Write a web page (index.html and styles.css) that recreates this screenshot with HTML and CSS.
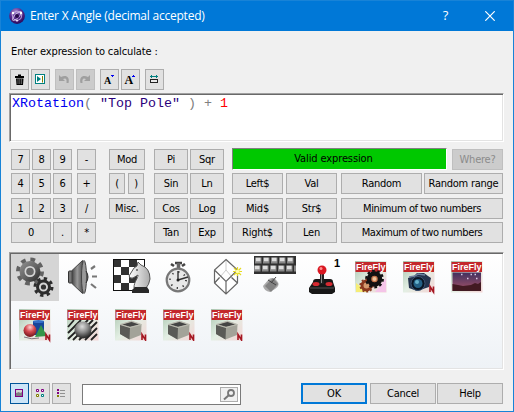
FILE: index.html
```html
<!DOCTYPE html>
<html lang="en">
<head>
<meta charset="utf-8">
<title>Enter X Angle (decimal accepted)</title>
<link rel="stylesheet" href="styles.css">
</head>
<body>
<svg width="0" height="0" class="defs">
  <defs>
    <linearGradient id="metal" x1="0" y1="0" x2="1" y2="1"><stop offset="0" stop-color="#888"/><stop offset=".5" stop-color="#666"/><stop offset="1" stop-color="#333"/></linearGradient>
    <linearGradient id="horn" x1="0" y1="0" x2="1" y2="0"><stop offset="0" stop-color="#444"/><stop offset=".5" stop-color="#999"/><stop offset="1" stop-color="#555"/></linearGradient>
    <linearGradient id="tile" x1="0" y1="0" x2="1" y2="1"><stop offset="0" stop-color="#a9c3ad"/><stop offset=".5" stop-color="#e3efe4"/><stop offset="1" stop-color="#f3d5d5"/></linearGradient>
    <linearGradient id="knight" x1="0" y1="0" x2="1" y2="0"><stop offset="0" stop-color="#fff"/><stop offset="1" stop-color="#aaa"/></linearGradient>
    <linearGradient id="dusk" x1="0" y1="0" x2="0" y2="1"><stop offset="0" stop-color="#41305f"/><stop offset="1" stop-color="#a65368"/></linearGradient>
    <radialGradient id="ball" cx=".45" cy=".3" r=".7"><stop offset="0" stop-color="#ddd"/><stop offset=".5" stop-color="#888"/><stop offset="1" stop-color="#222"/></radialGradient>
    <radialGradient id="redball" cx=".5" cy=".25" r=".7"><stop offset="0" stop-color="#ffd0d0"/><stop offset=".5" stop-color="#d54a50"/><stop offset="1" stop-color="#7c1a20"/></radialGradient>
    <radialGradient id="orb" cx=".4" cy=".25" r=".75"><stop offset="0" stop-color="#a58bd0"/><stop offset=".5" stop-color="#5a2d91"/><stop offset="1" stop-color="#2c0b5c"/></radialGradient>
    <symbol id="fly" viewBox="0 0 32 32">
      <rect width="31.5" height="31.5" fill="url(#tile)"/>
      <rect x=".5" y="1" width="30.500" height="10" fill="#c3272b"/>
      <text x="1" y="9" class="fly-name" textLength="29.5" lengthAdjust="spacingAndGlyphs">FireFly</text>
    </symbol>
    <symbol id="fly-box" viewBox="0 0 32 32">
      <use href="#fly" width="32" height="32"/>
      <path d="M5 15.500 16.500 12 26.500 15.500 26 26 14.500 30.500 5 25Z" fill="#a3a399"/>
      <path d="M5 15.500 15 18.500 14.500 30.500 5 25Z" fill="#5a5a56"/>
      <path d="M7.500 15.500 16.500 13 24 15.500 15 17.800Z" fill="#444"/>
      <path d="M5 15.500 16.500 12 26.500 15.500 15 18.500Z" fill="none" stroke="#bdbdb2"/>
      <path d="M27 31V25.500l3.500 5.500v-5.500" class="mark"/>
    </symbol>
  </defs>
</svg>
<main class="dialog">
  <header class="titlebar">
    <svg class="app-icon" viewBox="0 0 16 16"><circle cx="8" cy="8" r="7.900" fill="url(#orb)"/><path d="M3 5.500 8 3l5 2.500-1 5L8 13 4 10.500Z" fill="none" stroke="#c5afdf" stroke-width=".9"/><ellipse cx="8" cy="8" rx="2" ry="6" transform="rotate(45 8 8)" fill="none" stroke="#e4d6f2" stroke-width=".8"/><circle cx="8" cy="8" r="2" fill="#250a48"/><circle cx="4" cy="5" r="1.200" fill="#fff"/><circle cx="12" cy="5" r="1.200" fill="#fff"/><circle cx="8" cy="12.500" r="1.100" fill="#eddffa"/></svg>
    <h1 class="title">Enter X Angle (decimal accepted)</h1>
    <span class="help-mark">?</span>
    <svg class="close" viewBox="0 0 10 10"><path d="M.3.300 9.700 9.700M9.700.300.300 9.700" stroke="#fff" stroke-width="1.200"/></svg>
  </header>

  <p class="prompt">Enter expression to calculate :</p>

  <div class="toolbar">
    <button class="btn tool"><svg viewBox="0 0 19 19"><path d="M8 4.500h3V6h3v2H5V6h3ZM6 8.500h7.500l-.5 6.500H6.500Z" fill="#000"/><path d="M8 9v5m1.800-5v5m1.800-5v5" stroke="#aaa" stroke-width=".6"/></svg></button>
    <button class="btn tool"><svg viewBox="0 0 19 19"><rect x="4.500" y="4.500" width="9" height="9" fill="#fff" stroke="#008080"/><path d="M6 6v6l4-3Z" fill="#008080"/><path d="M11.500 6v6.500" stroke="#808000"/></svg></button>
    <button class="btn tool off second"><svg viewBox="0 0 19 19"><path d="M4 5v6h6L8 9c3-1.500 4 0 3.500 4h2C15 7 11 4.500 6 7Z" fill="#9f9f9f"/></svg></button>
    <button class="btn tool off"><svg viewBox="0 0 19 19"><path d="M14 5v6H8l2-2c-3-1.500-4 0-3.500 4h-2C3 7 7 4.500 12 7Z" fill="#9f9f9f"/></svg></button>
    <button class="btn tool second"><svg viewBox="0 0 19 19"><text x="4" y="14" class="letter">A</text><path d="M11 5h3v1h-1v1h-1V6h-1Z" fill="#0000f0"/></svg></button>
    <button class="btn tool"><svg viewBox="0 0 19 19"><text x="3.500" y="14" class="letter big">A</text><path d="M11 7h3V6h-1V5h-1v1h-1Z" fill="#0000f0"/></svg></button>
    <button class="btn tool second"><svg viewBox="0 0 19 19"><path d="M5 6.500h8M6.500 5v3M11.500 5v3" stroke="#008080"/><rect x="5.500" y="9.500" width="7" height="3" fill="#e8e8e8" stroke="#222"/></svg></button>
  </div>

  <div class="editor sunken"><span class="fn">XRotation</span>( <span class="str">"Top Pole"</span> ) + <span class="num">1</span></div>

  <section class="keys">
    <div class="group digits">
      <button class="btn">7</button><button class="btn">8</button><button class="btn">9</button>
      <button class="btn">4</button><button class="btn">5</button><button class="btn">6</button>
      <button class="btn">1</button><button class="btn">2</button><button class="btn">3</button>
      <button class="btn wide">0</button><button class="btn">.</button>
    </div>
    <div class="group ops"><button class="btn">-</button><button class="btn">+</button><button class="btn">/</button><button class="btn">*</button></div>
    <div class="group misc"><button class="btn wide">Mod</button><button class="btn paren">(</button><button class="btn paren">)</button><button class="btn wide">Misc.</button></div>
    <div class="group maths">
      <button class="btn">Pi</button><button class="btn">Sqr</button><button class="btn">Sin</button><button class="btn">Ln</button>
      <button class="btn">Cos</button><button class="btn">Log</button><button class="btn">Tan</button><button class="btn">Exp</button>
    </div>
    <div class="functions">
      <div class="status-row"><output class="status">Valid expression</output><button class="btn off where">Where?</button></div>
      <div class="lower">
        <div class="group strings">
          <button class="btn">Left$</button><button class="btn">Val</button><button class="btn">Mid$</button><button class="btn">Str$</button><button class="btn">Right$</button><button class="btn">Len</button>
        </div>
        <div class="group ranges">
          <button class="btn">Random</button><button class="btn range">Random range</button><button class="btn wide">Minimum of two numbers</button><button class="btn wide">Maximum of two numbers</button>
        </div>
      </div>
    </div>
  </section>

  <section class="objects sunken">
    <div class="cell selected"><svg viewBox="0 0 48 48"><circle cx="19" cy="17.500" r="12" fill="none" stroke="#626262" stroke-width="4" stroke-dasharray="4.700 4.725"/><circle cx="19" cy="17.500" r="8" fill="none" stroke="url(#metal)" stroke-width="5"/><circle cx="19" cy="17.500" r="3.800" fill="#666"/><circle cx="32.500" cy="33" r="8.500" fill="none" stroke="#2c2c2c" stroke-width="3" stroke-dasharray="3.300 3.376"/><circle cx="32.500" cy="33" r="6" fill="none" stroke="#2c2c2c" stroke-width="3"/><circle cx="32.500" cy="33" r="2.600" fill="#333"/></svg></div>
    <div class="cell"><svg viewBox="0 0 48 48"><rect x="9.500" y="17" width="4" height="12" rx="1" fill="#777" stroke="#333"/><path d="M13 16.500 23.500 6.500V39.500L13 29.500Z" fill="url(#horn)" stroke="#444"/><ellipse cx="25" cy="23" rx="2.500" ry="16.500" fill="#999" stroke="#444"/><path d="M27 17q4 6 0 12" fill="#555" stroke="#333"/><path d="m32 15 4-3M33 22.500h5M32 30l5 4" stroke="#777" stroke-width="2.200"/></svg></div>
    <div class="cell"><svg viewBox="0 0 48 48"><rect x="6.500" y="5.500" width="31" height="31" fill="#fff" stroke="#111"/><path d="M7 6h7v7H7zM22 6h8v7h-8zM14 13h8v8h-8zM30 13h7v8h-7zM7 21h7v8H7zM22 21h8v8h-8zM14 29h8v7h-8z" fill="#333"/><path d="M27 34c0-7 4-9 4-13l-5 3q-3 1-4-2l5-8 3-2 1-4 3 3q9 3 9 14-1 6-4 9Z" fill="url(#knight)" stroke="#555"/><circle cx="30" cy="16" r=".8"/><path d="M28 33h12l2 3v3H25v-3Z" fill="#292929"/></svg></div>
    <div class="cell"><svg viewBox="0 0 48 48"><path d="m16 10 3 2M30 10l-3 2M20 9h7" stroke="#444" stroke-width="2.600"/><path d="M23.500 9v5" stroke="#666" stroke-width="3.500"/><circle cx="23" cy="26" r="11.300" fill="#e8e8e8" stroke="#777" stroke-width="2.200"/><circle cx="23" cy="26" r="8" fill="none" stroke="#333" stroke-width="1.800" stroke-dasharray="1.300 4.980"/><path d="M23 17v9l10-3" fill="none" stroke="#333" stroke-width="1.400"/><circle cx="23" cy="26" r="1.500" fill="#222"/></svg></div>
    <div class="cell"><svg viewBox="0 0 48 48"><path d="m23 5.500 11.500 10.500v13L23 40 11.500 29V16Z" fill="#fff"/><path d="m23 16-11 13m11-13 11 13M23 6v10" fill="none" stroke="#ccc"/><path d="m23 5.500 11.500 10.500v13L23 40 11.500 29V16ZM11.500 16 23 27.500 34.500 16M23 27.500V40M11.500 29l5-5.500M34.500 29l-6-5.500" fill="none" stroke="#666" stroke-width="1.200"/><path d="M34.500 13v9M30 17.500h9M31 14l7 7M38 14l-7 7" stroke="#e7dc22" stroke-width="1.200"/><circle cx="34.500" cy="17.500" r="1.800" fill="#ffffb0"/></svg></div>
    <div class="cell"><svg viewBox="0 0 48 48"><rect x="3" y="2" width="42" height="18" fill="#303030"/><path d="M4 6.500h40M3 14.500h42" stroke="#888" stroke-width="6" stroke-dasharray="6.500 1.500"/><path d="M5 5.500h39M4 13.500h40" stroke="#ddd" stroke-width="3.500" stroke-dasharray="4.500 3.500"/><path d="m12 32 6-7q5-3 8 2 4 4-2 8l-5 3q-6-1-7-6Z" fill="#aaa"/><path d="m14 32 6 6 7-8-5-6Z" fill="#828282"/><path d="m17 26 8 5m-5-2 5-6" stroke="#444"/></svg></div>
    <div class="cell"><svg viewBox="0 0 48 48"><path d="M14 28q0-3 3-3h14q3 0 3 3l2 6v4l-3 2H13l-3-2v-4Z" fill="#171717"/><path d="M11 34h24" stroke="#555"/><ellipse cx="17" cy="30" rx="3.500" ry="2" fill="#d62a31"/><ellipse cx="30" cy="30" rx="3.500" ry="2" fill="#d62a31"/><path d="M23 18v12" stroke="#222" stroke-width="4"/><path d="M22.500 20v9" stroke="#888"/><circle cx="23" cy="16" r="4.500" fill="#d91822"/><circle cx="22" cy="14.500" r="1.500" fill="#ff8f8f"/><text x="35" y="13" class="one">1</text></svg></div>
    <div class="cell"><svg viewBox="-8 -7 48 48"><use href="#fly" width="32" height="32"/><path d="M1 22v9h12Z" fill="#f6ed76"/><path d="M20 31h11V17Z" fill="#f4c4e8"/><circle cx="11.500" cy="24.500" r="4.500" fill="#d59a6e" stroke="#8b3a20" stroke-width="3"/><circle cx="11.500" cy="24.500" r="6.300" fill="none" stroke="#8b3a20" stroke-width="1.600" stroke-dasharray="2 1.960"/><circle cx="19.500" cy="18" r="5.500" fill="#c5764c" stroke="#111" stroke-width="4.500"/><circle cx="19.500" cy="18" r="8.300" fill="none" stroke="#111" stroke-width="2.200" stroke-dasharray="2.700 2.515"/><circle cx="19.500" cy="18" r="2" fill="#eec49d"/></svg></div>
    <div class="cell"><svg viewBox="-8 -7 48 48"><use href="#fly" width="32" height="32"/><path d="m5 17 6-2 3-3h7l4 3 3 2-2 9-12 4-8-3Z" fill="#24344e"/><path d="m6 16 6-1 3-2 7 1" fill="none" stroke="#6d819f" stroke-width="1.500"/><circle cx="15" cy="22.500" r="7" fill="#0a1625" stroke="#3c5573"/><circle cx="15" cy="22.500" r="4.500" fill="#236085"/><circle cx="14" cy="21" r="2" fill="#66b2cc"/><path d="M27 31V25.500l3.500 5.500v-5.500" class="mark"/></svg></div>
    <div class="cell"><svg viewBox="-8 -7 48 48"><use href="#fly" width="32" height="32"/><rect x="1.500" y="11.500" width="28.500" height="18.500" fill="url(#dusk)"/><path d="m1.500 23 5.500 1 5 1 8-1 4-2 3 1 3-2v9H1.500Z" fill="#421a22"/><path d="M10 13.500h1.500m8 0H21m2.500 0H25m-9 4h1.500m7.500 0h1.500" stroke="#d9c8e4" stroke-width="1.300"/></svg></div>
    <div class="cell"><svg viewBox="-8 -7 48 48"><use href="#fly" width="32" height="32"/><path d="M14 12h11v14H14Z" fill="#17469a"/><ellipse cx="19.500" cy="12.500" rx="5.500" ry="1.500" fill="#356fc7"/><circle cx="11" cy="21.500" r="6.500" fill="url(#redball)"/><path d="m22 16 6 11-12 1Z" fill="#359548"/><path d="M5 28q8 3 15 1" stroke="#81707a" fill="none"/><path d="M27 31V25.500l3.500 5.500v-5.500" class="mark"/></svg></div>
    <div class="cell"><svg viewBox="-8 -7 48 48"><use href="#fly" width="32" height="32"/><path d="m1 18 6-7m-6 13 13-13M1 30l20-19M6 31l20-20M12 31l18-18M18 31l12-12M24 31l6-6" stroke="#222" stroke-width="1.800"/><circle cx="16" cy="21" r="8.500" fill="url(#ball)"/></svg></div>
    <div class="cell"><svg viewBox="-8 -7 48 48"><use href="#fly-box" width="32" height="32"/></svg></div>
    <div class="cell"><svg viewBox="-8 -7 48 48"><use href="#fly-box" width="32" height="32"/></svg></div>
    <div class="cell"><svg viewBox="-8 -7 48 48"><use href="#fly-box" width="32" height="32"/></svg></div>
  </section>

  <footer class="footer">
    <div class="views">
      <button class="btn tool active"><svg viewBox="0 0 19 19"><rect x="5.500" y="5.500" width="7" height="7" fill="#808080" stroke="#800080"/><path d="M6 6h6v2l-2 1-1-1-3 1Z" fill="#d5d5d5"/></svg></button>
      <button class="btn tool"><svg viewBox="0 0 19 19" fill="#fff"><path d="M5.500 5.500h2v2h-2zM10.500 5.500h2v2h-2z" stroke="#800080"/><path d="M5.500 10.500h2v2h-2z" stroke="#808000"/><path d="M10.500 10.500h2v2h-2z" stroke="#008080"/></svg></button>
      <button class="btn tool"><svg viewBox="0 0 19 19"><path d="M5 6h2M5 9h2" stroke="#800080" stroke-width="2"/><path d="M5 12h2" stroke="#808000" stroke-width="2"/><path d="M8 6.500h5M8 9.500h5M8 12.500h5" stroke="#909090"/></svg></button>
    </div>
    <div class="search"><input class="query" type="text" aria-label="Search"><span class="find"><svg viewBox="0 0 18 15"><circle cx="11" cy="6" r="3" fill="none" stroke="#777" stroke-width="1.800"/><path d="m9 8-5 4.500" stroke="#777" stroke-width="2"/></svg></span></div>
    <div class="actions"><button class="btn default">OK</button><button class="btn">Cancel</button><button class="btn">Help</button></div>
  </footer>
</main>
</body>
</html>
```
FILE: styles.css
```css
* { box-sizing: border-box; }
body { margin: 0; font: 11px/13px "DejaVu Sans Condensed", "DejaVu Sans", sans-serif; font-stretch: condensed; letter-spacing: -0.25px; color: #000; }
svg { display: block; }
.defs { position: absolute; }
.dialog { width: 514px; height: 412px; background: #f0f0f0; border: 1px solid #1883d7; display: flex; flex-direction: column; overflow: hidden; }
.titlebar { height: 30px; flex: none; background: #0078d7; color: #fff; display: flex; align-items: center; padding: 0 18px 2px 8px; }
.app-icon { width: 16px; height: 16px; margin-top: 1px; }
.title { font: 12px/16px "Open Sans", "Noto Sans", sans-serif; letter-spacing: -0.23px; margin: 1px 0 0 5px; flex: 1; white-space: nowrap; }
.help-mark { font: 13px/16px "Open Sans", sans-serif; margin-right: 37px; }
.close { width: 10px; height: 10px; margin-top: 1px; }
.prompt { margin: 14px 0 0 10px; height: 13px; flex: none; letter-spacing: -0.12px; }
.btn { font: inherit; letter-spacing: inherit; color: inherit; background: #e1e1e1; border: 1px solid #adadad; border-radius: 0; padding: 0; margin: 0; height: 21px; min-width: 0; white-space: nowrap; text-align: center; line-height: 19px; }
.off { background: #ccc; border-color: #bfbfbf; color: #8b8b8b; }
.tool { width: 19px; flex: none; }
.tool svg { width: 19px; height: 19px; margin: 0 -1px; }
.toolbar { display: flex; gap: 2px; margin: 11px 0 0 9px; flex: none; }
.second { margin-left: 3px; }
.letter { font: bold 10px "Liberation Serif", serif; }
.big { font-size: 12px; }
.sunken { border: 1px solid; border-color: #a0a0a0 #fff #fff #a0a0a0; box-shadow: inset 1px 1px #696969, inset -1px -1px #e3e3e3; margin-left: 8px; width: 495px; flex: none; }
.editor { height: 49px; margin-top: 3px; padding: 2px; background: #fff; font: 13.333px/15px "Liberation Mono", monospace; letter-spacing: 0; white-space: pre; color: #808080; }
.fn { color: #0000f0; }
.str { color: #29007b; }
.num { color: #f00; }
.keys { display: flex; margin: 6px 0 0 10px; height: 104px; flex: none; }
.group { display: grid; grid-template-rows: 24px 25px 24px 21px; align-content: start; padding-top: 1px; }
.digits { grid-template-columns: repeat(3, 19px); column-gap: 2px; }
.digits .wide { grid-column: span 2; }
.ops { width: 19px; margin-left: 5px; }
.misc { grid-template-columns: 16px 16px; column-gap: 3px; width: 36px; margin-left: 13px; }
.misc .wide { grid-column: span 2; width: 36px; }
.maths { grid-template-columns: 34px 34px; column-gap: 2px; margin-left: 9px; }
.functions { width: 271px; margin-left: 8px; }
.status-row { display: flex; height: 25px; gap: 5px; }
.status { width: 215px; height: 22px; background: #00c800; border: 1px solid; border-color: #808080 #fff #fff #808080; text-align: center; line-height: 19px; padding-right: 12px; letter-spacing: -0.12px; }
.where { width: 51px; margin-top: 1px; }
.lower { display: flex; gap: 4px; }
.lower .group { grid-template-rows: 25px 24px 21px; padding: 0; }
.strings { grid-template-columns: 51px 51px; column-gap: 3px; }
.ranges { grid-template-columns: 81px 79px; column-gap: 2px; }
.ranges .wide { grid-column: span 2; letter-spacing: -0.4px; }
.objects { height: 118px; background: linear-gradient(#fff, #eef2f6); padding: 1px; display: flex; flex-wrap: wrap; align-content: flex-start; }
.cell { width: 48px; height: 48px; }
.cell svg { width: 48px; height: 48px; }
.selected { background: linear-gradient(#d5d5d5, #d5d5d5) top / 100% 47px no-repeat; }
.fly-name { font: bold 9.5px "Liberation Sans", sans-serif; fill: #fff; letter-spacing: 0; }
.mark { fill: none; stroke: #a51722; stroke-width: 1.6; }
.one { font: bold 11px "Liberation Sans", sans-serif; }
.footer { display: flex; margin: 13px 10px 0 9px; }
.views { display: flex; gap: 2px; }
.active { background: #cce4f7; border-color: #005499; }
.search { width: 159px; height: 21px; margin: 1px 0 0 11px; background: #fff; border: 1px solid #7a7a7a; display: flex; padding: 2px; }
.query { flex: 1; min-width: 0; border: 0; padding: 0; background: none; }
.find { width: 18px; height: 15px; border: 1px solid #adadad; background: #f0f0f0; }
.find svg { width: 18px; height: 15px; margin: -1px; }
.actions { display: flex; margin-left: auto; }
.actions .btn { width: 66px; margin-left: 1px; }
.actions .default { border: 2px solid #0078d7; margin-right: 2px; line-height: 17px; }
```
